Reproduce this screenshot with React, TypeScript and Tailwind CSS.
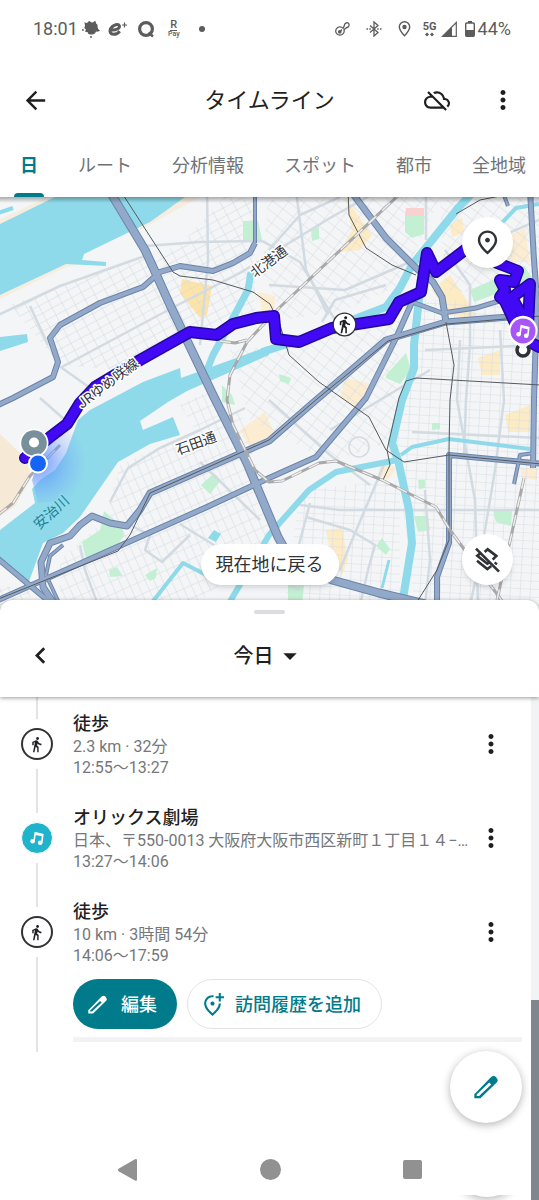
import React from 'react';
import {
  MdArrowBack,
  MdArrowDropDown,
  MdChevronLeft,
  MdDirectionsWalk,
  MdMoreVert,
  MdOutlineAddLocationAlt,
  MdOutlineCloudOff,
  MdOutlinePlace,
} from 'react-icons/md';

const waterLines: [string, number][] = [
  ['M262 352 L300 340 L386 307 L400 288 L412 265 L458 208 L475 190', 8],
  ['M251 272 L248 290 L233 318 L213 355 L203 380', 7],
  ['M421 280 L414 345 L414 368 L402 400 L392 443 L398 460 L409 510 L412 543 L402 605', 8],
  ['M397 460 L336 472 L309 490 L269 535 L228 605', 6],
  ['M401 455 L412 447 L449 439 L530 449', 4],
  ['M389 560 L382 588', 3],
  ['M150 605 L183 563 L208 576', 4],
  ['M539 204 L516 208 L498 227', 4],
  ['M-2 213 L13 208', 4],
];

const highways: [string, number][] = [
  ['M109 190 L145 250 L152 265 L170 305 L213 395 L247 463 L278 537 L292 562 L332 580 L379 593 L425 604', 9],
  ['M255 243 L250 253 L233 263 L213 271 L180 266 L160 272 L143 287 L100 303 L60 325 L50 338 L58 362 L53 377 L13 398 L-4 406', 6],
  ['M255 190 L255 243', 4],
  ['M350 190 L386 238 L416 268 L433 282 L442 297 L446 322', 7],
  ['M545 314 L509 317 L446 322 L386 340 L349 372 L315 401 L269 441 L150 493 L140 510 L127 526 L110 523 L92 516 L80 525 L70 536 L50 543 L41 562 L43 587 L55 605', 7],
  ['M412 302 L396 338 L366 398 L316 457 L269 478 L207 507 L-4 601', 6],
  ['M412 302 L442 313 L476 308 L509 298 L545 288', 5],
  ['M530 190 L534 260 L537 300 L534 400 L533 468', 6],
  ['M545 464 L449 455 L449 543 L437 577 L437 606', 6],
  ['M-4 557 L27 583 L52 604', 6],
  ['M63 545 L50 556 L46 575 L60 605', 4],
  ['M514 484 L520 455 L534 453', 4],
  ['M502 190 L508 206', 4],
];

const arterials = [
  'M-4 316 L60 286 L145 256',
  'M60 368 L172 308 L240 273 L330 218 L380 190',
  'M145 246 L200 242 L262 241 L300 262 L330 312 L344 332',
  'M207 190 L208 260 L200 345',
  'M30 306 L48 345',
  'M296 190 L306 270 L328 315',
  'M269 285 L345 290 L410 262',
  'M426 190 L426 240',
  'M445 250 L470 285 L470 345 L466 400 L464 455',
  'M386 285 L335 300 L322 322',
  'M500 330 L504 400 L495 470 L480 560 L470 605',
  'M425 350 L539 345',
  'M412 432 L539 438',
  'M300 505 L340 510 L539 510',
  'M386 460 L350 545 L340 570',
  'M310 503 L295 560',
  'M306 517 L350 530 L375 545 L368 570 L360 605',
  'M330 430 L430 370',
  'M269 400 L330 455 L370 485',
  'M110 502 L128 468 L160 448 L200 430 L245 408',
  'M180 524 L230 555 L300 590',
  'M132 526 L150 535 L145 550 L162 562 L190 535',
  'M80 545 L85 570 L98 605',
  'M200 462 L260 520',
  'M40 398 L65 420',
  'M470 250 L539 220',
  'M460 340 L457 400 L475 500 L478 605',
  'M425 490 L430 560 L425 605',
  'M269 250 L300 215 L340 197',
  'M62 368 L100 395',
];

const railways = [
  'M120 190 L173 272 L180 276 L213 280 L253 292 L270 304 L280 325 L289 355 L319 382 L369 417 L386 450 L404 462 L449 455 L541 464',
  'M348 190 L349 215 L366 248 L392 265 L416 275',
  'M383 480 L390 465 L387 450 L399 398 L406 381 L416 378 L541 385',
  'M446 322 L454 365 L450 400 L449 450 L449 540 L437 570 L415 605',
  'M456 214 L480 200 L500 196',
  'M541 316 L446 324 L388 341 L317 399 L269 440 L150 493 L130 535 L118 551 L-4 600',
];

const dashedRails = [
  'M404 190 L279 308 L247 342 L230 375 L227 400 L233 425 L255 470 L269 482 L282 481 L319 463 L336 461 L382 480 L436 507 L450 530 L505 605',
  'M524 478 L497 600',
  'M-2 515 L13 503 L30 476 L60 445',
  'M220 341 L235 343 L247 340',
];

const visitPath =
  'M25 458 L50 437 L67 424 L80 403 L95 387 L140 360 L190 332 L217 335 L233 324 L256 318 L274 316 L276 339 L299 342 L332 328 L389 319 L399 302 L421 292 L427 253 L436 272 L478 240 L497 263 L518 271 L514 282 L500 280 L505 290 L500 297 L506 302 L530 284 L528 325 L512 298 L503 297 L522 338 L539 347';

function CityMap() {
  return (
    <svg className="block h-[416px] w-full" viewBox="0 197 539 416" preserveAspectRatio="xMidYMin slice" role="img" aria-label="地図">
      <defs>
        <pattern id="gridWest" width="11" height="8" patternUnits="userSpaceOnUse" patternTransform="rotate(-28)">
          <path d="M0 0 H11 M0 0 V8" fill="none" stroke="#d3dae0" strokeWidth="1.1" />
        </pattern>
        <pattern id="gridMid" width="9" height="13" patternUnits="userSpaceOnUse" patternTransform="rotate(-52)">
          <path d="M0 0 H9 M0 0 V13" fill="none" stroke="#d7dde3" strokeWidth="1.1" />
        </pattern>
        <pattern id="gridEast" width="10" height="8" patternUnits="userSpaceOnUse" patternTransform="rotate(3)">
          <path d="M0 0 H10 M0 0 V8" fill="none" stroke="#d7dde3" strokeWidth="1.1" />
        </pattern>
        <pattern id="gridSouth" width="8" height="12" patternUnits="userSpaceOnUse" patternTransform="rotate(-24)">
          <path d="M0 0 H8 M0 0 V12" fill="none" stroke="#d5dce2" strokeWidth="1.1" />
        </pattern>
        <radialGradient id="heading" gradientUnits="userSpaceOnUse" cx="38" cy="463" r="50">
          <stop offset="0" stopColor="#3f7cff" stopOpacity="0.75" />
          <stop offset="1" stopColor="#7fa8ff" stopOpacity="0" />
        </radialGradient>
        <linearGradient id="topShade" x1="0" y1="0" x2="0" y2="1">
          <stop offset="0" stopColor="#000" stopOpacity="0.3" />
          <stop offset="1" stopColor="#000" stopOpacity="0" />
        </linearGradient>
      </defs>
      <rect x="0" y="190" width="539" height="430" fill="#f4f5f6" />

      <path d="M0 299 L66 267 L84 264 L66 263 L0 291Z M140 230 L200 197 L180 197 L140 222Z M0 226 L62 197 L48 197 L0 219Z" fill="#f6ede0" />
      <path d="M0 434 L27 460 L31 477 L15 506 L0 516Z" fill="#f6e9d5" />
      <path d="M182 279 L212 286 L207 315 L200 318 L180 293Z" fill="#fde4a6" />
      <path d="M345 197 L372 235 L360 250 L340 252 L352 230Z M450 225 L462 217 L464 232 L452 237Z M432 290 L450 275 L480 320 L450 315Z M478 358 L500 350 L500 375 L482 375Z M505 415 L530 405 L530 432 L508 432Z M326 530 L342 528 L348 560 L342 575 L330 550Z" fill="#fdebc4" />
      <path d="M240 430 L265 412 L275 435 L250 448Z M345 378 L375 385 L360 410 L340 398Z M500 240 L525 228 L530 262 L512 262Z M380 462 L396 468 L388 480 L378 475Z M258 292 L275 296 L274 318 L262 310Z M520 468 L537 468 L537 480 L522 478Z" fill="#fbecd2" />

      <path d="M10 305 L180 245 L225 197 L255 200 L255 310 L205 330 L120 370 L60 365Z" fill="url(#gridWest)" />
      <path d="M268 200 L440 197 L400 285 L345 310 L285 320 L262 270Z" fill="url(#gridMid)" />
      <path d="M230 350 L300 345 L400 320 L395 440 L330 462 L250 420Z" fill="url(#gridMid)" />
      <path d="M425 300 L539 300 L539 610 L415 610 L395 440Z M300 490 L400 480 L400 605 L285 605Z" fill="url(#gridEast)" />
      <path d="M440 200 L539 197 L539 300 L445 290Z" fill="url(#gridMid)" />
      <path d="M120 465 L240 410 L280 540 L200 600 L60 605 L60 560 L105 520Z M180 405 L210 390 L230 428 L195 430Z" fill="url(#gridSouth)" />
      <path d="M0 585 L30 590 L30 612 L0 612Z" fill="url(#gridSouth)" />

      <path d="M104 511 L122 526 L124 536 L112 551 L86 559 L82 542 L100 530Z M201 485 L214 473 L221 480 L210 494Z" fill="#c3efd3" />
      <path d="M243 221 L258 221 L262 240 L243 240Z M405 216 L424 216 L424 234 L412 238 L405 232Z M311 229 L319 227 L319 239 L312 241Z M470 290 L524 266 L534 280 L474 302Z M386 375 L406 353 L411 370 L400 384 L386 378Z M414 516 L428 516 L430 530 L418 532Z M376 546 L382 538 L390 549 L386 555Z M493 510 L512 511 L511 526 L496 522Z M109 570 L117 567 L123 576 L110 577Z M145 575 L157 568 L156 578 L150 581Z M432 423 L440 423 L440 429 L432 430Z M418 480 L425 480 L425 488 L419 489Z M279 374 L291 378 L289 384 L280 381Z M222 385 L232 395 L235 405 L222 402Z M288 585 L304 585 L302 605 L288 600Z" fill="#c3efd3" />
      <path d="M406 208 L424 208 L424 216 L405 216Z" fill="#fbd0d0" />

      <g fill="none" stroke="#d3dbe2" strokeWidth="2.5" strokeLinejoin="round">
        {arterials.map((d) => (
          <path key={d} d={d} />
        ))}
        <circle cx="359" cy="447" r="10" strokeWidth="1.5" />
      </g>

      <g fill="#8fdaea">
        <path d="M0 224 L55 197 L185 197 L150 222 L84 254 L82 260 L106 262 L106 266 L66 264 L0 295Z" />
        <path d="M0 337 L27 334 L28 342 L0 351Z" />
        <path d="M0 530 L35 503 L32 489 L40 480 L55 470 L66 453 L78 420 L90 410 L143 382 L180 368 L181 378 L269 346 L269 355 L187 391 L168 402 L140 421 L143 430 L173 417 L180 435 L150 444 L118 462 L80 517 L63 533 L43 543 L27 587 L0 560Z" />
        <path d="M214 530 L221 534 L216 542 L208 538Z" />
      </g>
      <g fill="none" stroke="#8fdaea" strokeLinejoin="round">
        {waterLines.map(([d, w]) => (
          <path key={d} d={d} strokeWidth={w} />
        ))}
      </g>

      <g fill="none" stroke="#6c84aa" strokeLinejoin="round">
        {highways.map(([d, w]) => (
          <path key={d} d={d} strokeWidth={w} />
        ))}
      </g>
      <g fill="none" stroke="#93a9c9" strokeLinejoin="round">
        {highways.map(([d, w]) => (
          <path key={d} d={d} strokeWidth={w - 2} />
        ))}
      </g>
      <g fill="none" stroke="#555a60" strokeWidth="1" strokeLinejoin="round">
        {railways.map((d) => (
          <path key={d} d={d} />
        ))}
      </g>
      {dashedRails.map((d) => (
        <g key={d} fill="none" strokeLinejoin="round">
          <path d={d} stroke="#a9a9a9" strokeWidth="3" />
          <path d={d} stroke="#ededed" strokeWidth="1.5" strokeDasharray="11 8" />
        </g>
      ))}

      <path d="M38 463 L62 421 A48 48 0 0 1 68 500 L38 503 L32 480Z" fill="url(#heading)" />
      <path d={visitPath} fill="none" stroke="#23069c" strokeWidth="12" strokeLinejoin="round" strokeLinecap="round" />
      <path d={visitPath} fill="none" stroke="#4209f5" strokeWidth="9" strokeLinejoin="round" strokeLinecap="round" />

      <g fontFamily='Roboto, "Noto Sans CJK JP", sans-serif' fontSize="14" fill="#33373b" stroke="#fff" strokeWidth="3" strokeLinejoin="round" paintOrder="stroke">
        <text transform="translate(82 409) rotate(-37)">JRゆめ咲線</text>
        <text transform="translate(255 278) rotate(-37)">北港通</text>
        <text transform="translate(178 455) rotate(-20)">石田通</text>
        <text transform="translate(39 530) rotate(-42)" fill="#1b8299" stroke="#8fdaea">安治川</text>
      </g>

      <circle cx="34" cy="443" r="14.5" fill="#fff" />
      <circle cx="34" cy="443" r="12.8" fill="#78909c" />
      <circle cx="34" cy="442.5" r="5" fill="#fff" />
      <circle cx="38" cy="463.5" r="10" fill="#fff" />
      <circle cx="38" cy="463.5" r="8" fill="#1664f5" />

      <circle cx="344.5" cy="324.5" r="11.3" fill="#fff" stroke="#2d3034" strokeWidth="1.3" />
      <MdDirectionsWalk x="335" y="315" size={19} color="#202124" />

      <circle cx="523" cy="350" r="6" fill="#fff" stroke="#2d3034" strokeWidth="3.5" />
      <path d="M509 334 A14.5 14.5 0 1 1 537 334 Q534 343 527 346 L523 352 L519 346 Q511 343 509 334Z" fill="#fff" />
      <circle cx="523" cy="331" r="12.5" fill="#a855f7" />
      <MusicShape x={514} y={322} size={18} />

      <rect x="0" y="197" width="539" height="6" fill="url(#topShade)" />
    </svg>
  );
}

function MusicShape({ x, y, size }: { x?: number; y?: number; size: number }) {
  return (
    <svg x={x} y={y} width={size} height={size} viewBox="0 0 18 18" aria-hidden="true">
      <path d="M6 12.2 L7.3 3.8 L14.8 5.5 L13.8 13.6" fill="none" stroke="#fff" strokeWidth="1.6" />
      <path d="M7 3.5 L15 5.3 L14.6 7.6 L6.7 5.8Z" fill="#fff" />
      <circle cx="4.6" cy="12.2" r="2.3" fill="#fff" />
      <circle cx="12.2" cy="13.7" r="2.3" fill="#fff" />
    </svg>
  );
}

function Pencil({ size }: { size: number }) {
  return (
    <svg width={size} height={size} viewBox="0 0 71 69" aria-hidden="true">
      <path
        fill="currentColor"
        fillRule="evenodd"
        d="M1 68 V56 L50 6 Q57 -1 64 4 L68 9 Q73 15 67 21 L19 68Z M8 61 H15 L51 27 L45 21 L8 57Z"
      />
    </svg>
  );
}

function LayersOff() {
  return (
    <svg width="25" height="26" viewBox="0 0 75 78" fill="none" stroke="currentColor" strokeWidth="8" aria-hidden="true">
      <path d="M3 5 L72 74" />
      <path d="M29 15 L38 7 L64 27 L53 38" />
      <path d="M19 17 L7 26 L37 50 L44 46" />
      <path d="M6 41 L37 66 L49 57" />
      <path d="M59 46 L66 52" strokeWidth="7" />
    </svg>
  );
}

function StatusBar() {
  return (
    <div className="flex h-[58px] items-center justify-between pr-7 pl-[33px] text-[18px] leading-6 text-[#5c5c5c]">
      <div className="flex items-center">
        <span>18:01</span>
        <svg className="ml-1" width="18" height="18" viewBox="0 0 18 18" fill="#5c5c5c" aria-hidden="true">
          <path d="M2.5 2 Q5 4 6 2 Q7.500 0 8.500 2 Q11 3 12 1.500 Q14 0 14 3.500 Q16 4 15.500 7 Q15.500 9 18 10.500 Q17 12 14 11.500 Q13 15 9 14.500 Q6 15 5.500 12 Q2 12.500 4 9.500 Q1.500 8 3 6Z" />
          <circle cx="0.900" cy="10" r="0.900" />
          <circle cx="9" cy="17" r="1" />
        </svg>
        <svg className="ml-2" width="20" height="18" viewBox="0 0 20 18" aria-hidden="true">
          <path d="M2.8 9.8 C8 10.6 12.3 8.2 11.3 5.6 C10 2.8 2.2 5.800 2 11 C2 15.500 8.500 15.200 11.800 11.200" fill="none" stroke="#5c5c5c" strokeWidth="3" />
          <path d="M14 5 H19 M16.5 2.5 V7.5" stroke="#5c5c5c" strokeWidth="1.2" />
        </svg>
        <svg className="ml-2" width="20" height="18" viewBox="0 0 20 18" fill="none" stroke="#5c5c5c" aria-hidden="true">
          <circle cx="10" cy="9" r="6.400" strokeWidth="3.200" />
          <path d="M12.500 12.500 L17 16.500" strokeWidth="2.500" />
        </svg>
        <span className="ml-2 flex w-5 flex-col items-center font-medium">
          <span className="border-b border-[#5c5c5c] text-[11px] leading-[10px]">R</span>
          <span className="text-[7px] leading-[7px]">Pay</span>
        </span>
        <span className="ml-[15px] size-[6px] rounded-full bg-[#5c5c5c]" />
      </div>
      <div className="flex items-center">
        <svg width="15" height="16" viewBox="0 0 15 16" fill="none" stroke="#5c5c5c" strokeWidth="1.3" aria-hidden="true">
          <path d="M8.2 7.3 L9 5.500 Q9.500 2 12 1.600 Q14.500 2 14 4.500 Q13.500 6.500 11 7 L9 8.800 A4.200 4.200 0 1 1 8.200 7.300Z" strokeLinejoin="round" />
          <circle cx="4.8" cy="10.800" r="1.200" fill="#5c5c5c" />
          <path d="M5 10.500 L7 8.500" />
        </svg>
        <svg className="ml-4" width="16" height="16" viewBox="0 0 16 16" fill="none" stroke="#5c5c5c" strokeWidth="1.3" aria-hidden="true">
          <path d="M4 4.500 L12 11.500 L8 15 V1 L12 4.500 L4 11.500" />
          <path d="M0.500 8 H2 M3.300 8 H4.800 M11.200 8 H12.700 M14 8 H15.500" strokeWidth="1.500" />
        </svg>
        <svg className="ml-4" width="13" height="16" viewBox="0 0 13 16" fill="none" stroke="#5c5c5c" strokeWidth="1.4" aria-hidden="true">
          <path d="M6.5 14.800 C3 11 1.300 8.500 1.300 6 A5.200 5.200 0 0 1 11.700 6 C11.700 8.500 10 11 6.500 14.800Z" />
          <circle cx="6.5" cy="6" r="1.500" fill="#5c5c5c" />
        </svg>
        <span className="ml-3 flex flex-col items-center">
          <span className="text-[11px] leading-[10px] font-bold">5G</span>
          <svg width="9" height="5" viewBox="0 0 9 5" fill="#5c5c5c" aria-hidden="true">
            <path d="M0 2.500 L2 0.500 L4 2.500 L2 4.500Z M5 2.500 L7 0.500 L9 2.500 L7 4.500Z" />
          </svg>
        </span>
        <svg className="ml-1" width="16" height="16" viewBox="0 0 16 16" aria-hidden="true">
          <path d="M1.500 15.300 L15.300 1.500 V15.300Z" fill="none" stroke="#5c5c5c" strokeWidth="1.200" />
          <path d="M0.500 16 L11 5.500 V16Z" fill="#5c5c5c" />
        </svg>
        <svg className="ml-2" width="10" height="16" viewBox="0 0 10 16" aria-hidden="true">
          <rect x="0.700" y="2" width="8.600" height="13.300" rx="1" fill="none" stroke="#5c5c5c" strokeWidth="1.400" />
          <path d="M3 0 H7 V2 H3Z M1 9 H9 V15 H1Z" fill="#5c5c5c" />
        </svg>
        <span className="ml-[3px]">44%</span>
      </div>
    </div>
  );
}

const tabs = ['日', 'ルート', '分析情報', 'スポット', '都市', '全地域'];

type Entry = { kind: 'walk' | 'place'; title: string; detail: string; time: string };

const entries: Entry[] = [
  { kind: 'walk', title: '徒歩', detail: '2.3 km · 32分', time: '12:55〜13:27' },
  { kind: 'place', title: 'オリックス劇場', detail: '日本、〒550-0013 大阪府大阪市西区新町１丁目１４−…', time: '13:27〜14:06' },
  { kind: 'walk', title: '徒歩', detail: '10 km · 3時間 54分', time: '14:06〜17:59' },
];

function TimelineItem({ entry, children }: { entry: Entry; children?: React.ReactNode }) {
  return (
    <li className="flex">
      <div className="flex w-[73px] shrink-0 flex-col items-center">
        <span className="h-[22px] w-[2px] bg-[#e1e3e4]" />
        {entry.kind === 'walk' ? (
          <span className="my-[9px] flex size-8 items-center justify-center rounded-full border-2 border-[#303236] text-[#202124]">
            <MdDirectionsWalk size={17} />
          </span>
        ) : (
          <span className="my-[9px] flex size-8 items-center justify-center rounded-full border border-white bg-[#1fb3cc]">
            <MusicShape size={18} />
          </span>
        )}
        <span className="w-[2px] flex-1 bg-[#e1e3e4]" />
      </div>
      <div className="min-w-0 flex-1">
        <div className="flex h-[94px]">
          <div className="min-w-0 flex-1 pt-[15px] whitespace-nowrap">
            <h2 className="text-[18px] leading-6 font-medium text-[#1f1f1f]">{entry.title}</h2>
            <p className="text-[16px] leading-[21px] text-[#74777b]">{entry.detail}</p>
            <p className="text-[16px] leading-[21px] text-[#74777b]">{entry.time}</p>
          </div>
          <button type="button" aria-label="その他" className="flex w-[81px] items-center justify-center text-[#1f1f1f]">
            <MdMoreVert size={30} />
          </button>
        </div>
        {children}
      </div>
    </li>
  );
}

export default function App() {
  return (
    <div className="relative flex min-h-screen flex-col overflow-hidden bg-white font-[Roboto,'Noto_Sans_CJK_JP',sans-serif] text-[#1f1f1f]">
      <header>
        <StatusBar />
        <div className="flex h-[84px] items-center px-[21px]">
          <div className="flex flex-1">
            <button type="button" aria-label="戻る">
              <MdArrowBack size={29} />
            </button>
          </div>
          <h1 className="pt-[2px] text-[22px] leading-8">タイムライン</h1>
          <div className="flex flex-1 items-center justify-end gap-[38px]">
            <button type="button" aria-label="バックアップ オフ">
              <MdOutlineCloudOff size={26} />
            </button>
            <button type="button" aria-label="その他のオプション">
              <MdMoreVert size={30} />
            </button>
          </div>
        </div>
        <nav className="flex h-[55px] gap-10 overflow-hidden pl-5 text-[18px] whitespace-nowrap">
          {tabs.map((tab, i) => (
            <button
              key={tab}
              type="button"
              className={i === 0 ? 'relative shrink-0 pb-2 font-bold text-[#007b8b]' : 'shrink-0 pb-2 text-[#6f7377]'}
            >
              {tab}
              {i === 0 && <span className="absolute -inset-x-[6px] bottom-0 h-1 rounded-t-sm bg-[#007b8b]" />}
            </button>
          ))}
        </nav>
      </header>

      <section className="relative">
        <CityMap />
        <button type="button" aria-label="場所" className="absolute top-5 right-[26px] flex size-[51px] items-center justify-center rounded-full bg-white text-[#303236] shadow-md">
          <MdOutlinePlace size={29} />
        </button>
        <button type="button" aria-label="レイヤ" className="absolute right-[26px] bottom-[28px] flex size-[51px] items-center justify-center rounded-full bg-white text-[#303236] shadow-md">
          <LayersOff />
        </button>
        <div className="absolute inset-x-0 bottom-[28px] flex justify-center">
          <button type="button" className="h-[41px] rounded-full bg-white px-[15px] text-[18px] text-[#303236] shadow-md">
            現在地に戻る
          </button>
        </div>
      </section>

      <div className="relative -mt-[13px] rounded-t-xl bg-white pt-[10px] shadow-[0_1px_4px_rgba(0,0,0,0.4)]">
        <div className="mx-auto h-1 w-[31px] rounded-full bg-[#dadce0]" />
        <div className="flex h-[83px] items-center px-6">
          <div className="flex flex-1">
            <button type="button" aria-label="前の日">
              <MdChevronLeft size={33} />
            </button>
          </div>
          <button type="button" className="flex items-center text-[20px] font-medium">
            今日
            <MdArrowDropDown size={32} />
          </button>
          <div className="flex-1" />
        </div>
      </div>

      <div className="flex flex-1">
        <div className="flex min-w-0 flex-1 flex-col">
          <main className="flex-1">
            <ol>
              <TimelineItem entry={entries[0]} />
              <TimelineItem entry={entries[1]} />
              <TimelineItem entry={entries[2]}>
                <div className="flex gap-[10px] text-[18px] font-medium whitespace-nowrap">
                  <button type="button" className="flex h-[50px] items-center gap-[14px] rounded-full bg-[#007b8b] pr-5 pl-[15px] text-white">
                    <Pencil size={19} />
                    編集
                  </button>
                  <button type="button" className="flex h-[50px] items-center gap-[10px] rounded-full border border-[#e3e3e3] pr-5 pl-3 text-[#007b8b]">
                    <MdOutlineAddLocationAlt size={25} />
                    訪問履歴を追加
                  </button>
                </div>
                <div className="mt-2 mr-[9px] mb-[10px] h-[5px] bg-[#f1f3f4]" />
              </TimelineItem>
            </ol>
          </main>
          <nav className="flex h-[61px] justify-center gap-[122px] pl-2 text-[#919191]">
            <button type="button" aria-label="戻る" className="flex w-[21px] justify-center self-start">
              <svg width="21" height="62" viewBox="0 0 21 62" fill="currentColor" aria-hidden="true">
                <path d="M1.5 29.8 L18 20.3 Q20 19.5 20 21.5 V40.5 Q20 42.5 18 41.5 L1.5 32.2 Q0 31 1.5 29.8Z" />
              </svg>
            </button>
            <button type="button" aria-label="ホーム" className="mt-5 size-[21px] rounded-full bg-current" />
            <button type="button" aria-label="最近使ったアプリ" className="mt-[21px] h-[19px] w-[19px] rounded-xs bg-current" />
          </nav>
        </div>
        <div className="flex w-2 flex-col bg-[#f1f3f4]" aria-hidden="true">
          <span className="flex-1" />
          <span className="h-[200px] bg-[#80868b]" />
        </div>
      </div>

      <div className="absolute right-2 bottom-0 flex h-[5px] w-[88px] items-end justify-center overflow-hidden pb-[3px]" aria-hidden="true">
        <span className="size-[72px] shrink-0 rounded-full bg-white shadow-[0_2px_8px_rgba(0,0,0,0.3)]" />
      </div>
      <button type="button" aria-label="編集" className="absolute right-[17px] bottom-[77px] flex size-[72px] items-center justify-center rounded-full bg-white text-[#007b8b] shadow-[0_2px_8px_rgba(0,0,0,0.3)]">
        <Pencil size={24} />
      </button>
    </div>
  );
}
